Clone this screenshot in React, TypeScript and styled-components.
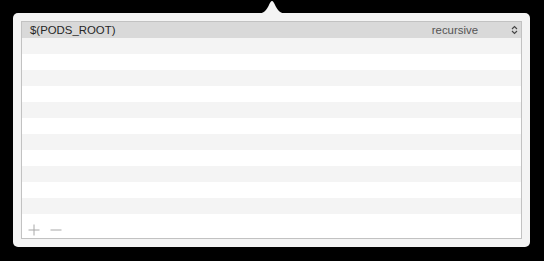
import React from "react";
import styled, { createGlobalStyle } from "styled-components";

const GlobalStyle = createGlobalStyle`
  html, body {
    margin: 0;
    padding: 0;
    background: #000;
  }
  body {
    font-family: "Liberation Sans", Arial, sans-serif;
  }
`;

const Screen = styled.div`
  width: 544px;
  height: 261px;
  background: #000;
  padding: 13px 0 0 13px;
  box-sizing: border-box;
`;

const Popover = styled.div`
  position: relative;
  width: 517px;
  height: 234px;
  box-sizing: border-box;
  padding: 8px;
  background: #f4f4f4;
  border-radius: 5px;
`;

const Arrow = styled.svg`
  position: absolute;
  left: 243px;
  top: -13px;
`;

const Table = styled.div`
  height: 218px;
  box-sizing: border-box;
  border: 1px solid #c2c2c2;
  background: #fff;
  display: flex;
  flex-direction: column;
`;

const Row = styled.div<{ $stripe?: boolean; $selected?: boolean }>`
  height: 16px;
  flex: 0 0 16px;
  display: flex;
  align-items: center;
  padding: 0 3px 0 8px;
  font-size: 11.4px;
  color: #262626;
  background: ${(p) => (p.$selected ? "#d9d9d9" : p.$stripe ? "#f4f4f4" : "#fff")};
`;

const PathText = styled.span`
  flex: 1;
`;

const Mode = styled.span`
  color: #555;
  margin-right: 33px;
`;

const Footer = styled.div`
  flex: 1;
  display: flex;
  align-items: center;
  gap: 10px;
  padding: 8px 0 0 6px;
`;

const Chevron = () => (
  <svg width="7" height="10" viewBox="0 0 7 10">
    <path d="M1 4 L3.5 1.5 L6 4 M1 6 L3.5 8.5 L6 6" fill="none" stroke="#444" strokeWidth="1.1" />
  </svg>
);

const Plus = () => (
  <svg width="12" height="12" viewBox="0 0 12 12">
    <path d="M6 0.5 V11.5 M0.5 6 H11.5" stroke="#a8a8a8" strokeWidth="1" />
  </svg>
);

const Minus = () => (
  <svg width="12" height="12" viewBox="0 0 12 12">
    <path d="M0.5 6 H11.5" stroke="#a8a8a8" strokeWidth="1" />
  </svg>
);

const App: React.FC = () => {
  const emptyRows = Array.from({ length: 11 }, (_, i) => i);
  return (
    <Screen>
      <GlobalStyle />
      <Popover>
        <Arrow width="32" height="14" viewBox="0 0 32 14">
          <path d="M0 14 C6 14 9.5 12 12.5 6 C14 2.5 15 1 16 1 C17 1 18 2.5 19.5 6 C22.5 12 26 14 32 14 Z" fill="#f4f4f4" />
        </Arrow>
        <Table>
          <Row $selected>
            <PathText>$(PODS_ROOT)</PathText>
            <Mode>recursive</Mode>
            <Chevron />
          </Row>
          {emptyRows.map((i) => (
            <Row key={i} $stripe={i % 2 === 0} />
          ))}
          <Footer>
            <Plus />
            <Minus />
          </Footer>
        </Table>
      </Popover>
    </Screen>
  );
};

export default App;
